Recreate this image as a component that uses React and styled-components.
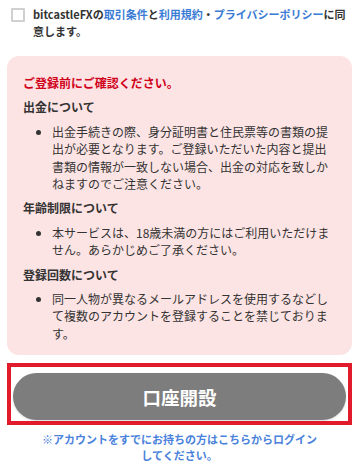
import React from 'react';
import styled, { createGlobalStyle } from 'styled-components';

const GlobalStyle = createGlobalStyle`
  body {
    margin: 0;
    background: #fff;
    font-family: 'Noto Sans CJK JP', 'Noto Sans', sans-serif;
    color: #333;
  }
`

const notes = [
  {
    title: '出金について',
    items: [
      '出金手続きの際、身分証明書と住民票等の書類の提出が必要となります。ご登録いただいた内容と提出書類の情報が一致しない場合、出金の対応を致しかねますのでご注意ください。',
    ],
  },
  {
    title: '年齢制限について',
    items: ['本サービスは、18歳未満の方にはご利用いただけません。あらかじめご了承ください。'],
  },
  {
    title: '登録回数について',
    items: ['同一人物が異なるメールアドレスを使用するなどして複数のアカウントを登録することを禁じております。'],
  },
]

export default function App() {
  return (
    <Page>
      <GlobalStyle />
      <AgreeRow>
        <CheckBox type="checkbox" />
        <AgreeText>
          bitcastleFXの<Link href="#">取引条件</Link>と<Link href="#">利用規約</Link>・<Link href="#">プライバシーポリシー</Link>に同意します。
        </AgreeText>
      </AgreeRow>

      <Notice>
        <NoticeTitle>ご登録前にご確認ください。</NoticeTitle>
        {notes.map((n) => (
          <React.Fragment key={n.title}>
            <Heading>{n.title}</Heading>
            <List>
              {n.items.map((it) => (
                <Item key={it}>{it}</Item>
              ))}
            </List>
          </React.Fragment>
        ))}
      </Notice>

      <Highlight>
        <OpenButton type="button">口座開設</OpenButton>
      </Highlight>

      <LoginNote href="#">
        ※アカウントをすでにお持ちの方はこちらからログイン
        <br />
        してください。
      </LoginNote>
    </Page>
  )
}

const Page = styled.div`
  width: 359px;
  padding: 8px 7px 0;
  box-sizing: border-box;
  display: flex;
  flex-direction: column;
`

const AgreeRow = styled.label`
  display: flex;
  align-items: flex-start;
  gap: 8px;
  padding: 0 4px;
`

const CheckBox = styled.input`
  appearance: none;
  flex: none;
  width: 14px;
  height: 14px;
  margin: 0;
  border: 2px solid #d0d0d0;
  border-radius: 1px;
  background: #fff;
  box-sizing: border-box;
`

const AgreeText = styled.span`
  font-size: 11px;
  line-height: 17px;
  font-weight: 700;
  color: #333;
  margin-top: -2px;
`

const Link = styled.a`
  color: #3a7bd5;
  text-decoration: none;
`

const Notice = styled.section`
  margin-top: 16px;
  background: #fde4e4;
  border-radius: 12px;
  padding: 18px 15px 13px 16px;
  display: flex;
  flex-direction: column;
  gap: 7px;
`

const NoticeTitle = styled.p`
  margin: 0;
  font-size: 12px;
  line-height: 17.4px;
  font-weight: 700;
  color: #d0021b;
`

const Heading = styled.h3`
  margin: 0;
  font-size: 12px;
  line-height: 17.4px;
  font-weight: 700;
  color: #333;
`

const List = styled.ul`
  margin: 0;
  padding: 0 0 0 29px;
  list-style: disc;
`

const Item = styled.li`
  font-size: 12px;
  line-height: 17.4px;
  color: #333;
`

const Highlight = styled.div`
  margin-top: 8px;
  border: 4px solid #e21b2c;
  padding: 6px 2px 1px;
`

const OpenButton = styled.button`
  display: block;
  width: 100%;
  height: 47px;
  border: none;
  border-radius: 24px;
  background: #7d7d7d;
  color: #fff;
  font-family: inherit;
  font-size: 18.5px;
  font-weight: 700;
  box-shadow: 0 1px 2px rgba(0, 0, 0, 0.15);
  cursor: pointer;
`

const LoginNote = styled.a`
  margin-top: 6px;
  align-self: center;
  text-align: center;
  font-size: 11px;
  line-height: 16px;
  font-weight: 700;
  color: #4a82dc;
  text-decoration: none;
`
